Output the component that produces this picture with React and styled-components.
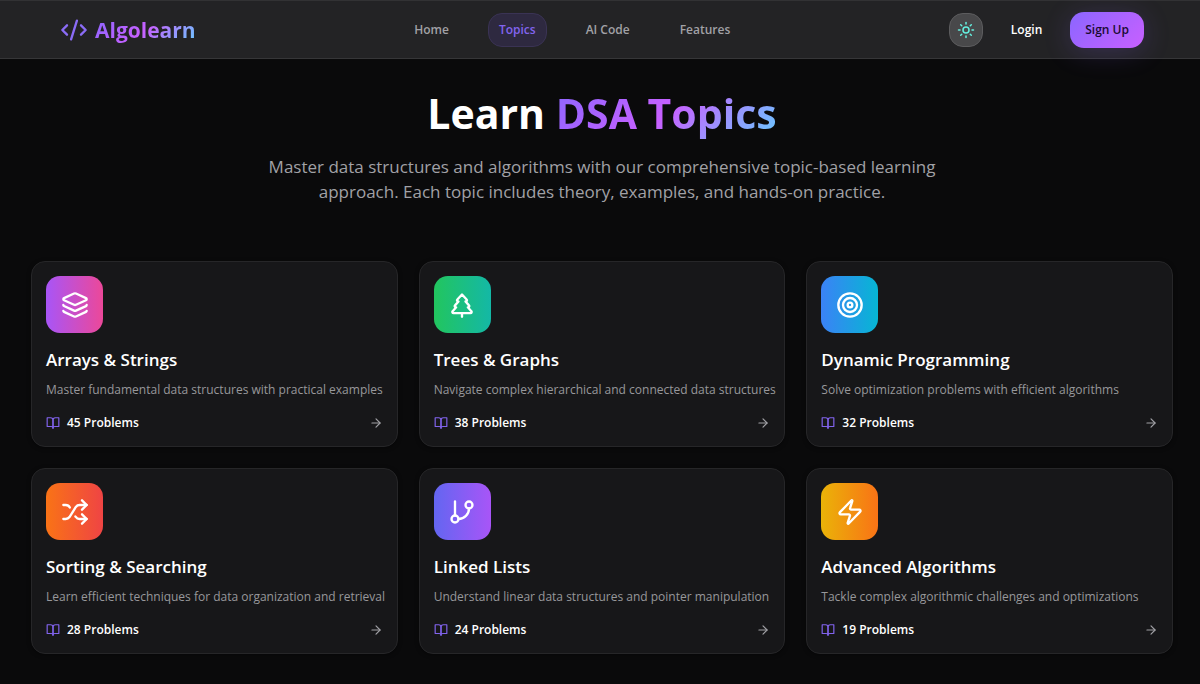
import React from 'react';
import styled, { createGlobalStyle } from 'styled-components';
import { Sun, Layers, TreePine, Target, Shuffle, GitBranch, Zap, ArrowRight, CodeXml } from 'lucide-react';
import { FiBookOpen } from 'react-icons/fi';

const GlobalStyle = createGlobalStyle`
  * {
    box-sizing: border-box;
  }

  body {
    margin: 0;
    background: #0a0a0b;
    color: #fff;
    font-family: 'Segoe UI', 'Open Sans', 'Noto Sans', sans-serif;
  }
`;

const Header = styled.header`
  display: flex;
  align-items: center;
  justify-content: space-between;
  height: 59px;
  padding: 0 56px 0 60px;
  background: #232325;
  border-top: 1px solid #323234;
  border-bottom: 1px solid #363638;
`;

const Logo = styled.a`
  display: flex;
  align-items: center;
  gap: 7px;
  color: #8b6cf6;
  text-decoration: none;
`;

const GradientText = styled.span`
  background: linear-gradient(135deg, #8b66ff 0%, #c860ff 50%, #66ccff 100%);
  background-clip: text;
  -webkit-background-clip: text;
  color: transparent;
`;

const LogoText = styled(GradientText)`
  font-size: 21px;
  line-height: 28px;
  font-weight: 700;
`;

const Nav = styled.nav`
  display: flex;
  gap: 28px;
`;

const NavLink = styled.a`
  padding: 6px 10px;
  border: 1px solid ${props => (props.$active ? '#3a3354' : 'transparent')};
  border-radius: 14px;
  background: ${props => (props.$active ? '#2e2940' : 'transparent')};
  color: ${props => (props.$active ? '#8264ee' : '#a1a1a6')};
  font-size: 12px;
  line-height: 20px;
  font-weight: 600;
  text-decoration: none;
`;

const Actions = styled.div`
  display: flex;
  align-items: center;
  gap: 28px;
`;

const ThemeButton = styled.button`
  display: flex;
  align-items: center;
  justify-content: center;
  width: 34px;
  height: 34px;
  padding: 0;
  border: 1px solid #5c5c5e;
  border-radius: 14px;
  background: #48484a;
  color: #64f0e0;
  cursor: pointer;
`;

const LoginLink = styled.a`
  color: #fff;
  font-size: 12px;
  line-height: 20px;
  font-weight: 600;
  text-decoration: none;
`;

const SignUpButton = styled.button`
  height: 36px;
  padding: 0 15px;
  border: 0;
  border-radius: 14px;
  background: linear-gradient(135deg, #8b66ff, #c860ff);
  box-shadow: 0 4px 28px rgba(139, 102, 255, 0.2);
  color: #1a0b33;
  font-family: inherit;
  font-size: 12px;
  font-weight: 600;
  cursor: pointer;
`;

const Main = styled.main`
  padding: 27px 27px 28px 31px;
`;

const Hero = styled.section`
  display: flex;
  flex-direction: column;
  align-items: center;
  margin-bottom: 57px;
  text-align: center;
`;

const Title = styled.h1`
  margin: 0 0 14px;
  font-size: 41px;
  line-height: 54px;
  font-weight: 700;
`;

const Lead = styled.p`
  max-width: 684px;
  margin: 0;
  color: #a1a1a6;
  font-size: 17px;
  line-height: 25px;
`;

const TopicGrid = styled.section`
  display: grid;
  grid-template-columns: repeat(3, minmax(0, 1fr));
  gap: 21px;

  @media screen and (max-width: 1100px) {
    grid-template-columns: repeat(2, minmax(0, 1fr));
  }

  @media screen and (max-width: 760px) {
    grid-template-columns: minmax(0, 1fr);
  }
`;

const Card = styled.article`
  padding: 14px;
  border: 1px solid #262628;
  border-radius: 14px;
  background: #171719;
  box-shadow: 0 1px 4px rgba(0, 0, 0, 0.4);
`;

const IconTile = styled.div`
  display: flex;
  align-items: center;
  justify-content: center;
  width: 57px;
  height: 57px;
  border-radius: 14px;
  background: linear-gradient(to right, ${props => props.$from}, ${props => props.$to});
`;

const CardTitle = styled.h2`
  margin: 13px 0 6px;
  font-size: 17px;
  line-height: 28px;
  font-weight: 600;
`;

const CardText = styled.p`
  margin: 0 0 13px;
  color: #97979b;
  font-size: 12px;
  line-height: 20px;
  white-space: nowrap;
`;

const CardFooter = styled.div`
  display: flex;
  align-items: center;
  justify-content: space-between;
  color: #a1a1a6;
`;

const Problems = styled.span`
  display: flex;
  align-items: center;
  gap: 7px;
  color: #fff;
  font-size: 12px;
  line-height: 19px;
  font-weight: 600;

  svg {
    color: #8264ee;
  }
`;

const links = ['Home', 'Topics', 'AI Code', 'Features'];

const topics = [
  {
    title: 'Arrays & Strings',
    text: 'Master fundamental data structures with practical examples',
    count: 45,
    icon: Layers,
    from: '#a855f7',
    to: '#ec4899',
  },
  {
    title: 'Trees & Graphs',
    text: 'Navigate complex hierarchical and connected data structures',
    count: 38,
    icon: TreePine,
    from: '#22c55e',
    to: '#14b8a6',
  },
  {
    title: 'Dynamic Programming',
    text: 'Solve optimization problems with efficient algorithms',
    count: 32,
    icon: Target,
    from: '#3b82f6',
    to: '#06b6d4',
  },
  {
    title: 'Sorting & Searching',
    text: 'Learn efficient techniques for data organization and retrieval',
    count: 28,
    icon: Shuffle,
    from: '#f97316',
    to: '#ef4444',
  },
  {
    title: 'Linked Lists',
    text: 'Understand linear data structures and pointer manipulation',
    count: 24,
    icon: GitBranch,
    from: '#6366f1',
    to: '#a855f7',
  },
  {
    title: 'Advanced Algorithms',
    text: 'Tackle complex algorithmic challenges and optimizations',
    count: 19,
    icon: Zap,
    from: '#eab308',
    to: '#f97316',
  },
];

function TopicCard({ title, text, count, icon: Icon, from, to }) {
  return (
    <Card>
      <IconTile $from={from} $to={to}>
        <Icon size={28} color="#fff" />
      </IconTile>
      <CardTitle>{title}</CardTitle>
      <CardText>{text}</CardText>
      <CardFooter>
        <Problems>
          <FiBookOpen size={14} />
          {count} Problems
        </Problems>
        <ArrowRight size={14} />
      </CardFooter>
    </Card>
  );
}

export default function App() {
  return (
    <>
      <GlobalStyle />
      <Header>
        <Logo href="#">
          <CodeXml size={28} />
          <LogoText>Algolearn</LogoText>
        </Logo>
        <Nav>
          {links.map(link => (
            <NavLink key={link} href="#" $active={link === 'Topics'}>
              {link}
            </NavLink>
          ))}
        </Nav>
        <Actions>
          <ThemeButton type="button" aria-label="Toggle theme">
            <Sun size={18} />
          </ThemeButton>
          <LoginLink href="#">Login</LoginLink>
          <SignUpButton type="button">Sign Up</SignUpButton>
        </Actions>
      </Header>
      <Main>
        <Hero>
          <Title>
            Learn <GradientText>DSA Topics</GradientText>
          </Title>
          <Lead>
            Master data structures and algorithms with our comprehensive topic-based learning approach. Each topic
            includes theory, examples, and hands-on practice.
          </Lead>
        </Hero>
        <TopicGrid>
          {topics.map(topic => (
            <TopicCard key={topic.title} {...topic} />
          ))}
        </TopicGrid>
      </Main>
    </>
  );
}
